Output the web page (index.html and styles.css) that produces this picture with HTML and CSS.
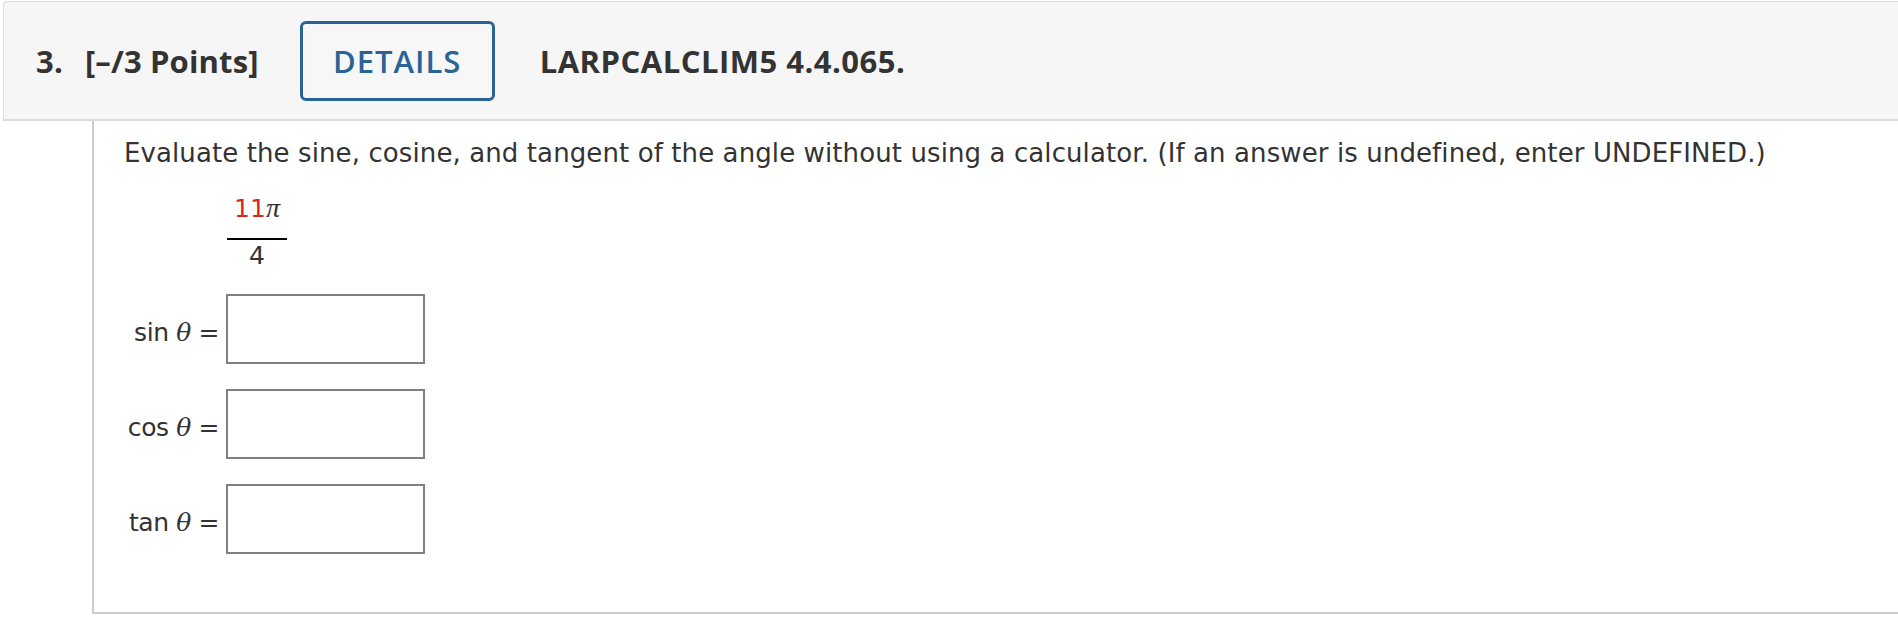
FILE: index.html
```html
<!DOCTYPE html>
<html lang="en">
<head>
<meta charset="utf-8">
<title>Question 3</title>
<link rel="stylesheet" href="styles.css">
</head>
<body>
<div class="page">
  <div class="qhead">
    <span class="qnum">3.</span>
    <span class="qpts">[–/3 Points]</span>
    <button class="details" type="button">DETAILS</button>
    <span class="qid">LARPCALCLIM5 4.4.065.</span>
  </div>
  <div class="qbody">
    <p class="prompt">Evaluate the sine, cosine, and tangent of the angle without using a calculator. (If an answer is undefined, enter UNDEFINED.)</p>
    <div class="frac">
      <span class="num"><span class="red">11</span><i class="greek">π</i></span>
      <span class="den">4</span>
    </div>
    <div class="answers">
      <span class="lbl">sin <i class="theta">θ</i> =</span><span class="box"></span>
      <span class="lbl">cos <i class="theta">θ</i> =</span><span class="box"></span>
      <span class="lbl">tan <i class="theta">θ</i> =</span><span class="box"></span>
    </div>
  </div>
</div>
</body>
</html>
```

FILE: styles.css
```css
html, body {
  margin: 0;
  padding: 0;
  background: #ffffff;
}

.page {
  overflow: hidden;
  padding-top: 1px;
  padding-left: 3px;
  font-family: "DejaVu Sans", Verdana, sans-serif;
  color: #333333;
}

.qhead {
  display: flex;
  align-items: center;
  height: 117px;
  margin-right: -20px;
  padding-left: 32px;
  background: #f6f6f6;
  border: 1px solid #dddddd;
  border-bottom: 2px solid #dcdcdc;
  border-top-left-radius: 4px;
  font-family: "Open Sans", sans-serif;
  font-weight: 700;
  font-size: 31px;
  letter-spacing: 0.15px;
  color: #333333;
}

.qnum {
  margin-right: 22px;
}

.qpts {
  margin-right: 41px;
}

.details {
  box-sizing: border-box;
  width: 195px;
  height: 80px;
  margin: 0 45px 0 0;
  padding: 0;
  background: #f7f7f7;
  border: 3px solid #2a6496;
  border-radius: 6px;
  font-family: "Open Sans", sans-serif;
  font-weight: 600;
  font-size: 31px;
  letter-spacing: 1px;
  color: #2a6496;
}

.qid {
  letter-spacing: 0.5px;
}

.qbody {
  margin-left: 89px;
  margin-right: -20px;
  padding: 17px 0 58px 30px;
  border-left: 2px solid #cccccc;
  border-bottom: 2px solid #cccccc;
}

.prompt {
  margin: 0;
  font-size: 26px;
  line-height: 30px;
  letter-spacing: 0.1px;
}

.frac {
  display: inline-flex;
  flex-direction: column;
  align-items: center;
  margin: 26px 0 0 103px;
  padding: 0;
  width: 60px;
  font-size: 25px;
  line-height: 28px;
}

.num {
  padding-bottom: 15px;
  width: 100%;
  text-align: center;
  border-bottom: 2px solid #000000;
}

.red {
  color: #d42a20;
}

.greek {
  font-family: "Liberation Serif", "Times New Roman", serif;
  font-style: italic;
  font-size: 28px;
}

.theta {
  font-family: "DejaVu Serif", "Liberation Serif", serif;
  font-style: italic;
  font-size: 25px;
}

.den {
  margin-top: 2px;
}

.answers {
  display: grid;
  grid-template-columns: 95px 199px;
  column-gap: 7px;
  row-gap: 25px;
  align-items: center;
  margin-top: 24px;
  font-size: 25px;
}

.lbl {
  justify-self: end;
  white-space: nowrap;
  padding-top: 6px;
  letter-spacing: -0.4px;
}

.box {
  box-sizing: border-box;
  height: 70px;
  border: 2px solid #808080;
  background: #ffffff;
}
```
